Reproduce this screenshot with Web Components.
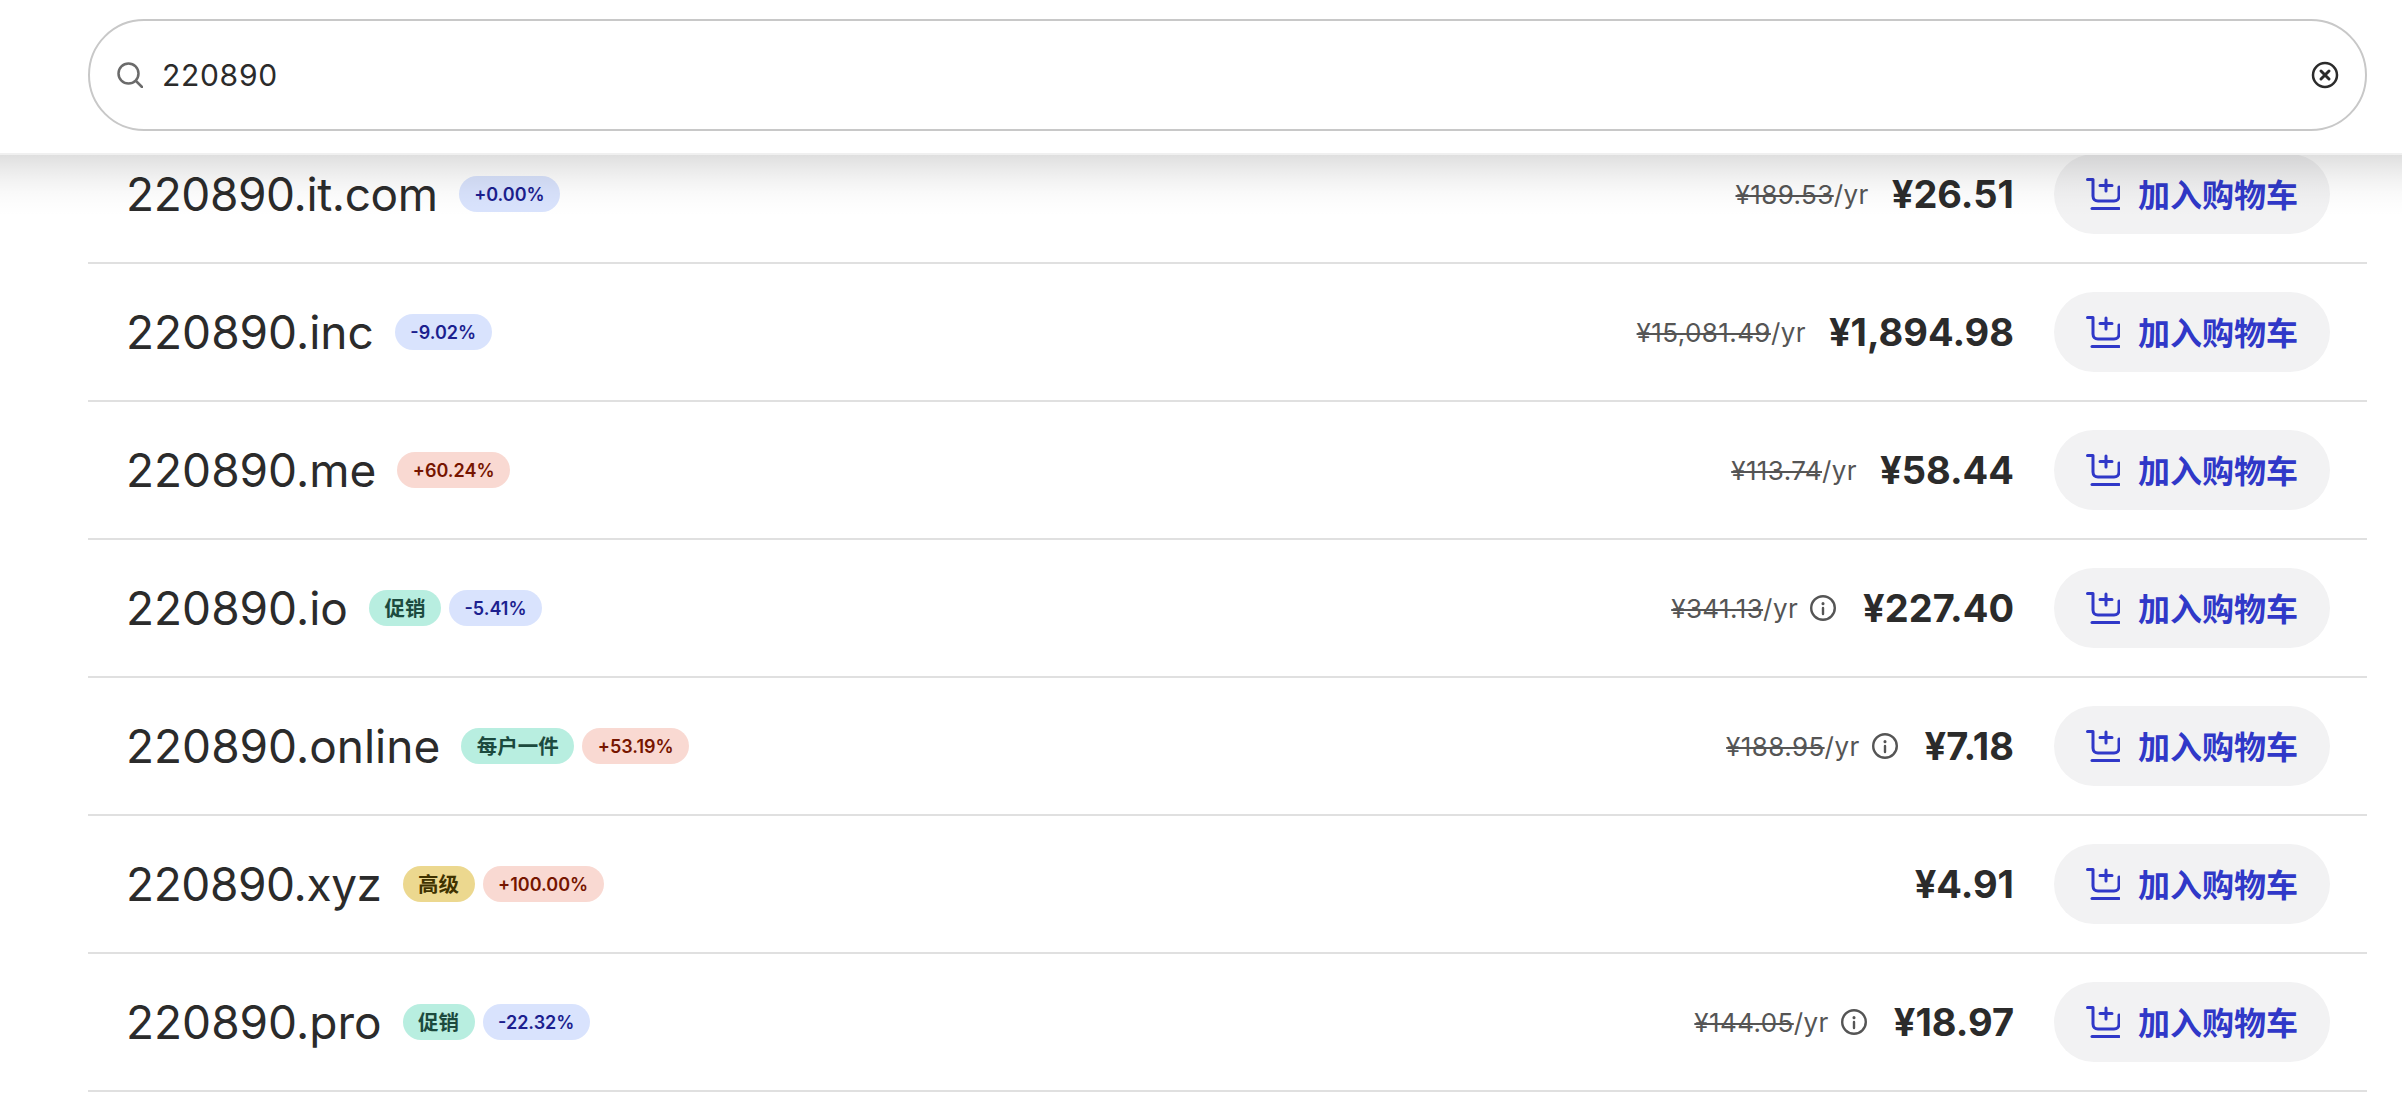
<!DOCTYPE html>
<html><head><meta charset="utf-8">
<style>
html,body{margin:0;padding:0;background:#fff;overflow:hidden;height:1107px}
body{font-family:"Inter","Noto Sans CJK SC",sans-serif;color:#2b2b2b}
</style></head><body>
<search-header value="220890"></search-header>
<domain-list>
<domain-row tight name="220890.it.com" old="¥189.53" price="¥26.51" badges="b:+0.00%"></domain-row>
<domain-row name="220890.inc" old="¥15,081.49" price="¥1,894.98" badges="b:-9.02%"></domain-row>
<domain-row name="220890.me" old="¥113.74" price="¥58.44" badges="r:+60.24%"></domain-row>
<domain-row name="220890.io" old="¥341.13" info price="¥227.40" badges="g:促销|b:-5.41%"></domain-row>
<domain-row name="220890.online" old="¥188.95" info price="¥7.18" badges="g:每户一件|r:+53.19%"></domain-row>
<domain-row tight name="220890.xyz" price="¥4.91" badges="y:高级|r:+100.00%"></domain-row>
<domain-row name="220890.pro" old="¥144.05" info price="¥18.97" badges="g:促销|b:-22.32%"></domain-row>
</domain-list>
<script>
const FONT='"Inter","Noto Sans CJK SC",sans-serif';
class SearchHeader extends HTMLElement{constructor(){super();const v=this.getAttribute('value');
this.attachShadow({mode:'open'}).innerHTML=`<style>
:host{display:block;position:relative;z-index:2;height:155px;box-sizing:border-box;padding:19px 35px 0 88px;background:#fff;border-bottom:2px solid #f0f0f0}
:host::after{content:"";position:absolute;left:0;right:0;top:100%;margin-top:2px;height:62px;pointer-events:none;background:linear-gradient(to bottom,rgba(0,0,0,.125),rgba(0,0,0,.085) 20%,rgba(0,0,0,.05) 40%,rgba(0,0,0,.024) 60%,rgba(0,0,0,.008) 80%,rgba(0,0,0,0))}
.box{height:112px;box-sizing:border-box;border:2px solid #c8c8c8;border-radius:56px;display:flex;align-items:center;padding:0 26px 0 27px;gap:19px;font:30px ${FONT};letter-spacing:.7px;color:#2b2b2b}
.t{flex:1}
svg{display:block;flex:none}
</style><div class="box">
<svg width="26" height="26" viewBox="0 0 26 26" fill="none" stroke="#6b6b6b" stroke-width="2.5" stroke-linecap="round"><circle cx="11.5" cy="11.5" r="10"/><path d="M19 19l6 6"/></svg>
<span class="t">${v}</span>
<svg width="28" height="28" viewBox="0 0 28 28" fill="none" stroke="#2b2b2b" stroke-width="2.5" stroke-linecap="round"><circle cx="14" cy="14" r="12"/><path d="M10 10l8 8M18 10l-8 8" stroke-width="3"/></svg>
</div>`;}}
customElements.define('search-header',SearchHeader);
class DomainList extends HTMLElement{constructor(){super();
this.attachShadow({mode:'open'}).innerHTML=`<style>:host{display:block;margin:-29px 35px 0 88px}</style><slot></slot>`;}}
customElements.define('domain-list',DomainList);
class TagBadge extends HTMLElement{constructor(){super();
this.attachShadow({mode:'open'}).innerHTML=`<style>
:host{display:inline-flex;align-items:center;box-sizing:border-box;height:36px;padding:0 15.5px;border-radius:18px;font:600 18px ${FONT};white-space:nowrap}
:host([kind=b]){background:#d9e3fd;color:#1c1f8f}
:host([kind=r]){background:#f9d9d2;color:#761500}
:host([kind=g]){background:#b8eee0;color:#1c4a3e;font-size:20.5px;padding:0 15.5px 2px}
:host([kind=y]){background:#ecd88f;color:#3f3200;font-size:20.5px;padding:0 15.5px 2px}
</style><slot></slot>`;}}
customElements.define('tag-badge',TagBadge);
class CartButton extends HTMLElement{constructor(){super();
this.attachShadow({mode:'open'}).innerHTML=`<style>
:host{display:flex;align-items:center;justify-content:center;gap:18px;width:276px;height:80px;border-radius:40px;background:#f2f2f3;color:#3038c8;font:700 32px "Noto Sans CJK SC",sans-serif;flex:none}
svg{display:block}
span{margin-bottom:3px}
</style><svg width="34" height="34" viewBox="0 0 34 34" fill="none" stroke="currentColor" stroke-width="3" stroke-linecap="round" stroke-linejoin="round"><path d="M1.5 2.5H7V19c0 3 2 5 5 5H28c3 0 5-2 5-5V10"/><path d="M20 3V14M14 8.5H26"/><path d="M6 31.5H33"/></svg><span>加入购物车</span>`;}}
customElements.define('cart-button',CartButton);
class DomainRow extends HTMLElement{constructor(){super();
const g=k=>this.getAttribute(k),old=g('old'),badges=g('badges').split('|').map(s=>{const[k,t]=s.split(':');return `<tag-badge kind="${k}">${t}</tag-badge>`}).join('');
const info=this.hasAttribute('info')?`<svg width="26" height="26" viewBox="0 0 26 26" fill="none" stroke="#555" stroke-width="2.4" stroke-linecap="round"><circle cx="13" cy="13" r="11.8"/><path d="M13 13v6"/><path d="M13 8.5v.2" stroke-width="3"/></svg>`:'';
this.attachShadow({mode:'open'}).innerHTML=`<style>
:host{display:flex;align-items:center;box-sizing:border-box;height:138px;padding:0 37px 0 38px;border-bottom:2px solid #e0e0e0}
.n{font:46px ${FONT};color:#2b2b2b;white-space:nowrap}
:host([tight]) .n{letter-spacing:-.4px}
.bs{display:flex;gap:8px;margin-left:21px;flex:1}
.o{display:flex;align-items:center;gap:12px;font:26px ${FONT};letter-spacing:.4px;color:#555;margin-right:23px}
.o svg{margin-right:4px}
s{text-decoration-thickness:2px}
.p{font:700 38px ${FONT};color:#2b2b2b;margin-right:40px}
svg{display:block}
</style><span class="n">${g('name')}</span><div class="bs">${badges}</div>
${old?`<div class="o"><span><s>${old}</s>/yr</span>${info}</div>`:''}
<span class="p">${g('price')}</span><cart-button></cart-button>`;}}
customElements.define('domain-row',DomainRow);
</script>
</body></html>
